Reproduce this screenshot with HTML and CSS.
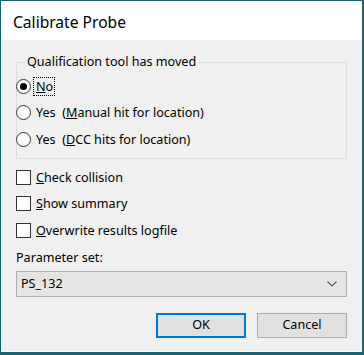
FILE: index.html
```html
<!DOCTYPE html>
<html>
<head>
<meta charset="utf-8">
<link rel="stylesheet" href="styles.css">
</head>
<body>
<div class="window">
  <div class="titlebar"><span class="title">Calibrate Probe</span></div>
  <div class="client">
    <fieldset class="group">
      <legend class="legend">Qualification tool has moved</legend>
      <div class="row">
        <span class="radio checked"></span>
        <span class="label focus"><u>N</u>o</span>
      </div>
      <div class="row">
        <span class="radio"></span>
        <span class="label">Yes&nbsp; (<u>M</u>anual hit for location)</span>
      </div>
      <div class="row">
        <span class="radio"></span>
        <span class="label">Yes&nbsp; (<u>D</u>CC hits for location)</span>
      </div>
    </fieldset>
    <div class="checks">
      <div class="row"><span class="box"></span><span class="label"><u>C</u>heck collision</span></div>
      <div class="row"><span class="box"></span><span class="label"><u>S</u>how summary</span></div>
      <div class="row"><span class="box"></span><span class="label"><u>O</u>verwrite results logfile</span></div>
    </div>
    <div class="param-label">Parameter set:</div>
    <div class="combo">
      <span class="combo-text">PS_132</span>
      <svg class="chevron" width="10" height="6" viewBox="0 0 10 6"><path d="M0.5 0.5 L5 5 L9.5 0.5" fill="none" stroke="#606060" stroke-width="1.2"/></svg>
    </div>
    <div class="buttons">
      <div class="btn default">OK</div>
      <div class="btn">Cancel</div>
    </div>
  </div>
</div>
</body>
</html>
```
FILE: styles.css
```css
html, body {
  margin: 0;
  padding: 0;
  background: #1c6272;
}
.window {
  width: 364px;
  height: 355px;
  box-sizing: border-box;
  border-left: 1px solid #1c6272;
  border-top: 1px solid #1c6272;
  border-right: 2px solid #1c6272;
  border-bottom: 3px solid #1c6272;
  background: #f0f0f0;
  font-family: "Noto Sans", "Open Sans", sans-serif;
  font-size: 12.6px;
  color: #000;
  display: flex;
  flex-direction: column;
}
.titlebar {
  height: 39px;
  background: #fff;
  display: flex;
  align-items: center;
  padding-left: 12px;
  flex: none;
}
.title {
  font-size: 15.6px;
  color: #000;
  padding-top: 2px;
}
.client {
  flex: 1;
  padding: 14px 14px 0 15px;
  display: flex;
  flex-direction: column;
  border-bottom: 1px solid #fafafa;
  border-right: 1px solid #f7f7f7;
}
.group {
  margin: 0;
  padding: 3px 0 5px 0;
  border: 1px solid #dcdcdc;
  min-width: 0;
}
.legend {
  padding: 0 2px;
  margin-left: 8px;
  line-height: 16px;
}
.row {
  height: 26.5px;
  display: flex;
  align-items: center;
}
.group .row {
  margin-left: -1px;
}
.radio {
  width: 13px;
  height: 13px;
  border: 1px solid #333;
  border-radius: 50%;
  background: #fff;
  position: relative;
  flex: none;
  margin-right: 5px;
}
.radio.checked::after {
  content: "";
  position: absolute;
  left: 3px;
  top: 3px;
  width: 7px;
  height: 7px;
  border-radius: 50%;
  background: #000;
}
.label {
  line-height: 17px;
  white-space: nowrap;
}
.focus {
  outline: 1px dotted #000;
  outline-offset: 0;
  padding: 0 1px 0 2px;
  margin-left: -2px;
}
.checks {
  margin-top: 5.5px;
}
.box {
  width: 13px;
  height: 13px;
  border: 1px solid #333;
  background: #fff;
  flex: none;
  margin-right: 5px;
}
.param-label {
  margin-top: 6px;
  line-height: 16px;
}
.combo {
  margin-top: 5px;
  height: 24px;
  border: 1px solid #adadad;
  background: #e5e5e5;
  display: flex;
  align-items: center;
  justify-content: space-between;
  padding: 0 9px 0 4px;
}
.combo-text {
  line-height: 16px;
}
.buttons {
  margin-top: 16px;
  display: flex;
  justify-content: flex-end;
  gap: 11px;
}
.btn {
  width: 88px;
  height: 23px;
  border: 1px solid #adadad;
  background: #e1e1e1;
  display: flex;
  align-items: center;
  justify-content: center;
  line-height: 16px;
}
.btn.default {
  width: 86px;
  height: 21px;
  border: 2px solid #0078d7;
}
```
